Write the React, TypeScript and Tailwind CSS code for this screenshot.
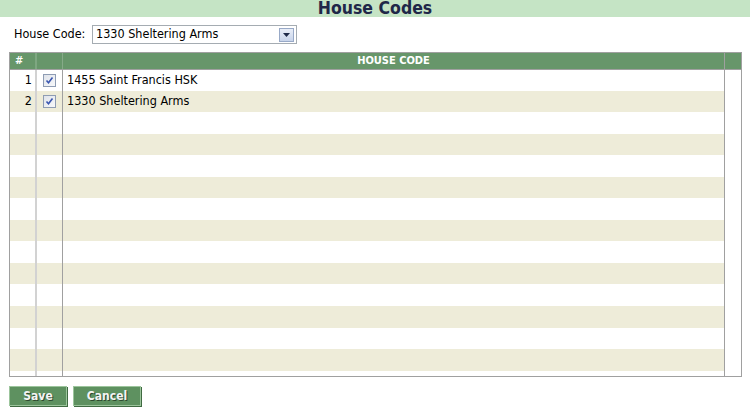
import React from "react";

const rows = [
  { n: 1, name: "1455 Saint Francis HSK" },
  { n: 2, name: "1330 Sheltering Arms" },
];

function Check() {
  return (
    <div className="w-[13px] h-[13px] border border-[#8e9cb3] bg-gradient-to-br from-[#dfe3ea] to-[#f7f8fa] flex items-center justify-center">
      <svg width="9" height="9" viewBox="0 0 9 9">
        <path d="M1.5 4.5 L3.5 6.8 L7.5 1.5" stroke="#3a56b0" strokeWidth="1.6" fill="none" />
      </svg>
    </div>
  );
}

function Row({ i, n, name, h }: { i: number; n?: number; name?: string; h: number }) {
  const bg = i % 2 === 1 ? "bg-[#eeecd9]" : "bg-white";
  return (
    <div className="flex" style={{ height: h }}>
      <div className={`w-[27px] shrink-0 border-r-2 border-[#d2d2d2] ${bg} flex items-center justify-end pr-[3px]`}>
        {n}
      </div>
      <div className={`w-[26px] shrink-0 border-r border-[#a0a0a0] ${bg} flex items-center justify-center`}>
        {n ? <Check /> : null}
      </div>
      <div className={`flex-1 border-r border-[#a0a0a0] ${bg} flex items-center pl-[4px]`}>{name}</div>
      <div className="w-[16px] shrink-0 bg-white" />
    </div>
  );
}

export default function App() {
  const heights = [21, 21, 22, 21, 22, 21, 22, 21, 22, 21, 22, 22, 21, 22];
  return (
    <div
      className="w-[750px] h-[408px] bg-white text-[12.5px] text-black overflow-hidden"
      style={{ fontFamily: '"DejaVu Sans Condensed", "DejaVu Sans", sans-serif' }}
    >
      <div className="h-[17px] bg-[#c5e4c5] flex items-center justify-center">
        <span className="text-[17.5px] font-bold text-[#1f2748] leading-[17px]">House Codes</span>
      </div>
      <div className="flex items-center h-[35px] pl-[14px]">
        <span className="w-[78px] shrink-0">House Code:</span>
        <div className="w-[205px] h-[19px] border border-[#a5acb2] flex items-center justify-between pl-[3px] pr-[2px]">
          <span>1330 Sheltering Arms</span>
          <div className="w-[15px] h-[14px] border border-[#98a9c7] bg-gradient-to-b from-[#e9eef8] to-[#c8d4ea] flex items-center justify-center">
            <svg width="7" height="4" viewBox="0 0 7 4">
              <path d="M0 0 H7 L3.5 4 Z" fill="#1e2a48" />
            </svg>
          </div>
        </div>
      </div>
      <div className="ml-[9px] w-[733px] h-[325px] border border-[#a0a0a0] flex flex-col">
        <div className="flex h-[17px] bg-[#67966a] text-white font-bold text-[11px] border-b border-[#a0a0a0]">
          <div className="w-[27px] shrink-0 border-r-2 border-[#7ea781] flex items-center pl-[5px]">#</div>
          <div className="w-[26px] shrink-0 border-r border-[#86aa88]" />
          <div className="flex-1 border-r border-[#a0a0a0] flex items-center justify-center">HOUSE CODE</div>
          <div className="w-[16px] shrink-0" />
        </div>
        {heights.map((h, i) => (
          <Row key={i} i={i} h={h} n={rows[i]?.n} name={rows[i]?.name} />
        ))}
        <div className="flex flex-1">
          <div className="w-[27px] shrink-0 border-r-2 border-[#d2d2d2]" />
          <div className="w-[26px] shrink-0 border-r border-[#a0a0a0]" />
          <div className="flex-1 border-r border-[#a0a0a0]" />
          <div className="w-[16px] shrink-0" />
        </div>
      </div>
      <div className="flex gap-[6px] ml-[9px] mt-[9px]">
        <button className="w-[58px] h-[20px] bg-[#5e9160] border border-[#9cc59c] text-[#f4f4f4] font-bold text-[12px] flex items-center justify-center [text-shadow:1px_1px_0_#2d4a2e] shadow-[1px_1px_0_#3f6a41]">
          Save
        </button>
        <button className="w-[68px] h-[20px] bg-[#5e9160] border border-[#9cc59c] text-[#f4f4f4] font-bold text-[12px] flex items-center justify-center [text-shadow:1px_1px_0_#2d4a2e] shadow-[1px_1px_0_#3f6a41]">
          Cancel
        </button>
      </div>
    </div>
  );
}
